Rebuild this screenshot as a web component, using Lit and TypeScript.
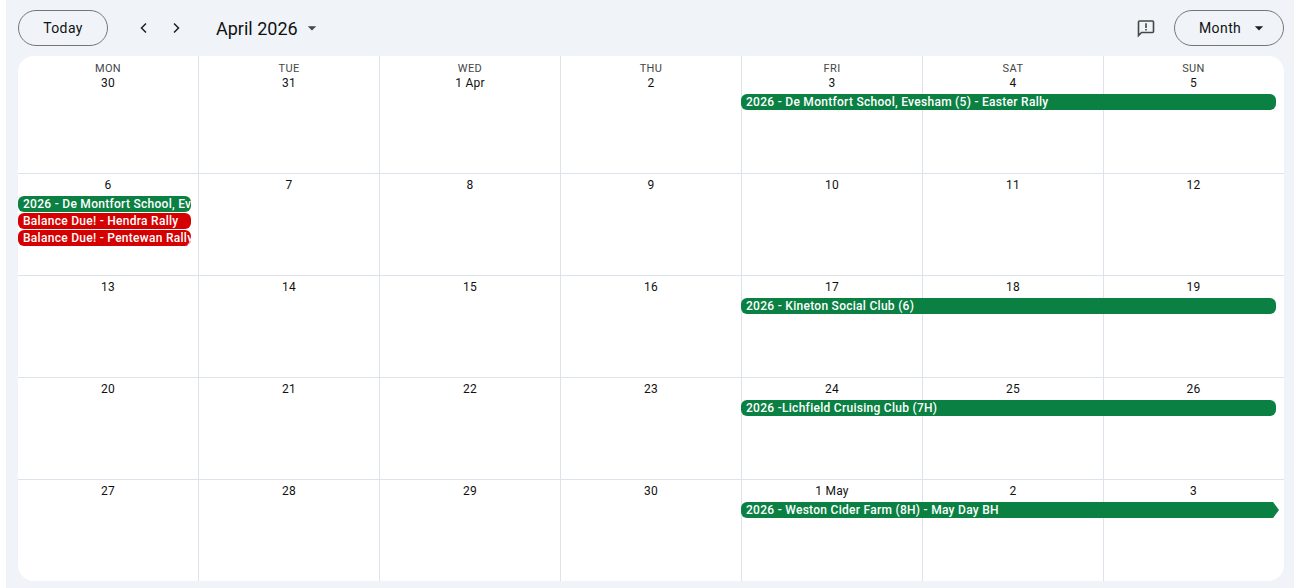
import { LitElement, html, css, svg } from "lit";
import { customElement } from "lit/decorators.js";

type Ev = { col: number; span: number; row: number; text: string; color: string; arrow?: boolean };
type Week = { days: string[]; head?: boolean; events: Ev[] };

const GREEN = "#0b8043";
const RED = "#d50000";
const HEAD = ["MON", "TUE", "WED", "THU", "FRI", "SAT", "SUN"];
const WEEKS: Week[] = [
  { head: true, days: ["30", "31", "1 Apr", "2", "3", "4", "5"], events: [
    { col: 5, span: 3, row: 1, color: GREEN, text: "2026 - De Montfort School, Evesham (5) - Easter Rally" },
  ] },
  { days: ["6", "7", "8", "9", "10", "11", "12"], events: [
    { col: 1, span: 1, row: 1, color: GREEN, text: "2026 - De Montfort School, Evesham (5) - Easter Rally" },
    { col: 1, span: 1, row: 2, color: RED, text: "Balance Due! - Hendra Rally" },
    { col: 1, span: 1, row: 3, color: RED, text: "Balance Due! - Pentewan Rally" },
  ] },
  { days: ["13", "14", "15", "16", "17", "18", "19"], events: [
    { col: 5, span: 3, row: 1, color: GREEN, text: "2026 - Kineton Social Club (6)" },
  ] },
  { days: ["20", "21", "22", "23", "24", "25", "26"], events: [
    { col: 5, span: 3, row: 1, color: GREEN, text: "2026 -Lichfield Cruising Club (7H)" },
  ] },
  { days: ["27", "28", "29", "30", "1 May", "2", "3"], events: [
    { col: 5, span: 3, row: 1, color: GREEN, arrow: true, text: "2026 - Weston Cider Farm (8H) - May Day BH" },
  ] },
];

const caret = svg`<path d="M7 10l5 5 5-5z" fill="currentColor"/>`;

@customElement("app-root")
export class AppRoot extends LitElement {
  static styles = css`
    :host { display: block; height: 588px; overflow: hidden; background: #fff; font-family: Roboto, "Noto Sans", sans-serif; color: #1f1f1f; }
    .shell { margin-left: 6px; height: 588px; box-sizing: border-box; padding: 0 10px 7px 12px; background: #f0f4f9; display: flex; flex-direction: column; }
    .bar { height: 56px; flex: none; display: flex; align-items: center; }
    .pill { box-sizing: border-box; height: 36px; border: 1px solid #747775; border-radius: 18px; background: transparent; font: 450 14px Roboto, sans-serif; color: #111; display: flex; align-items: center; justify-content: center; padding: 0; letter-spacing: .4px; }
    .today { width: 90px; margin-right: 20px; }
    .nav { width: 32px; height: 32px; display: flex; align-items: center; justify-content: center; color: #1f1f1f; }
    .nav svg { width: 16px; height: 16px; }
    .title { margin-left: 24px; font: 400 18px Roboto, sans-serif; color: #111; }
    .title-caret { width: 20px; height: 20px; margin-left: 4px; color: #444746; display: block; }
    .spacer { flex: 1; }
    .fb { width: 20px; height: 20px; color: #444746; margin-right: 18px; display: block; }
    .month { width: 110px; justify-content: flex-start; padding-left: 24px; }
    .month svg { width: 20px; height: 20px; color: #1f1f1f; margin-left: 8px; }
    .card { flex: 1; background: #fff; border-radius: 16px; overflow: hidden; display: flex; flex-direction: column; }
    .week { display: grid; grid-template-columns: repeat(6, 181px) 1fr; grid-template-rows: auto repeat(3, 17px) 1fr; height: 102px; box-sizing: border-box; border-bottom: 1px solid #dde3ea; }
    .week.first { height: 118px; }
    .week:last-child { border-bottom: 0; height: 101px; }
    .bg { grid-row: 1 / -1; border-right: 1px solid #dde3ea; }
    .bg:nth-child(7) { border-right: 0; }
    .head { grid-row: 1; text-align: center; padding: 3px 1px 3px 0; height: 16px; font: 400 12px/16px Roboto, sans-serif; color: #111; }
    .first .head { height: 30px; padding-top: 5px; padding-bottom: 3px; }
    .dow { display: block; font: 400 11px/14px Roboto, sans-serif; letter-spacing: .4px; color: #444746; position: relative; top: 1px; }
    .num { display: block; line-height: 16px; font-weight: 450; letter-spacing: 0.2px; }
    .ev { box-sizing: border-box; height: 16px; margin-right: 8px; border-radius: 6px; padding-left: 5px; color: #fff; font: 500 12px/16px Roboto, sans-serif; letter-spacing: .28px; white-space: nowrap; overflow: hidden; position: relative; z-index: 1; }
    .ev.shift { margin-left: -1px; }
    .ev.arrow { margin-right: 5px; border-radius: 6px 0 0 6px; clip-path: polygon(0 0, calc(100% - 6px) 0, 100% 50%, calc(100% - 6px) 100%, 0 100%); }
  `;

  private week(w: Week) {
    return html`<div class="week ${w.head ? "first" : ""}">
      ${w.days.map((_, i) => html`<div class="bg" style="grid-column:${i + 1}"></div>`)}
      ${w.days.map((d, i) => html`<div class="head" style="grid-column:${i + 1}">
        ${w.head ? html`<span class="dow">${HEAD[i]}</span>` : ""}<span class="num">${d}</span>
      </div>`)}
      ${w.events.map((e) => html`<div class="ev ${e.arrow ? "arrow" : ""} ${e.col > 1 ? "shift" : ""}"
        style="grid-column:${e.col} / span ${e.span};grid-row:${e.row + 1};background:${e.color}">${e.text}</div>`)}
    </div>`;
  }

  render() {
    return html`<div class="shell">
      <div class="bar">
        <button class="pill today">Today</button>
        <span class="nav"><svg viewBox="0 0 16 16"><path d="M10 3.5L5.5 8l4.5 4.5" fill="none" stroke="currentColor" stroke-width="1.5"/></svg></span>
        <span class="nav"><svg viewBox="0 0 16 16"><path d="M6 3.5L10.5 8 6 12.5" fill="none" stroke="currentColor" stroke-width="1.5"/></svg></span>
        <span class="title">April 2026</span>
        <svg class="title-caret" viewBox="0 0 24 24">${caret}</svg>
        <span class="spacer"></span>
        <svg class="fb" viewBox="0 0 20 20"><path d="M2.5 17.5V4a1 1 0 0 1 1-1h13a1 1 0 0 1 1 1v9.5a1 1 0 0 1-1 1H5.5z" fill="none" stroke="currentColor" stroke-width="1.6"/><path d="M9.2 5.2h1.6v4.8H9.2zM9.2 11h1.6v1.6H9.2z" fill="currentColor"/></svg>
        <button class="pill month">Month<svg viewBox="0 0 24 24">${caret}</svg></button>
      </div>
      <div class="card">${WEEKS.map((w) => this.week(w))}</div>
    </div>`;
  }
}
